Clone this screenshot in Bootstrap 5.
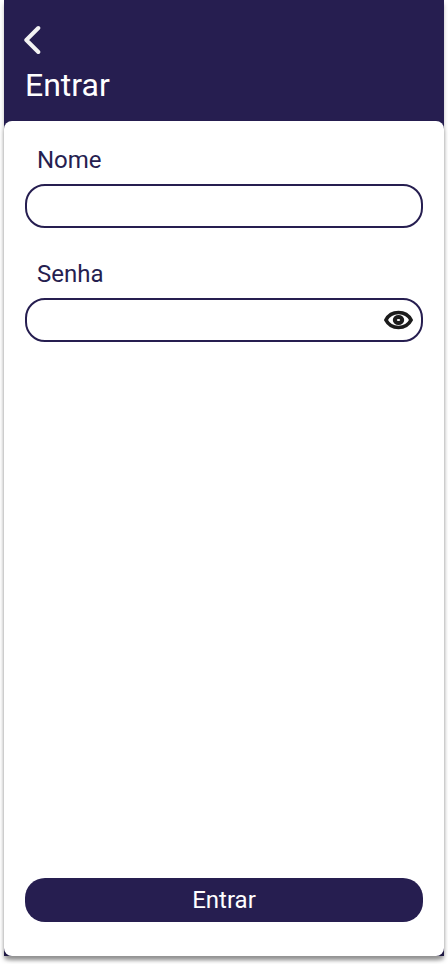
<!DOCTYPE html>
<html lang="pt-BR">
<head>
<meta charset="utf-8">
<meta name="viewport" content="width=device-width, initial-scale=1">
<title>Entrar</title>
<link href="https://cdn.jsdelivr.net/npm/bootstrap@5.3.0/dist/css/bootstrap.min.css" rel="stylesheet">
<style>
:root { --brand: #261e50; }
body { font-family: Roboto, "Liberation Sans", sans-serif; height: 964px; overflow: hidden; background: #fff; }
.screen { width: 440px; height: 956px; background: var(--brand); box-shadow: 0 4px 4px rgba(0,0,0,.25); }
.screen-header { height: 121px; padding: 24px 20px 0; }
.back-link { width: 18px; height: 32px; margin-bottom: 10px; }
.screen-title { font-size: 32px; line-height: 38px; padding-left: 1px; font-weight: 400; }
.panel { border-radius: 8px; padding: 24px 21px 34px; box-shadow: 0 4px 4px rgba(0,0,0,.25); }
.field-label { font-size: 24px; line-height: 30px; color: var(--brand); padding-left: 12px; margin-bottom: 9px; }
.field-group + .field-group { margin-top: 31px; }
.field { height: 44px; border: 2px solid var(--brand); border-radius: 20px; }
.field input { height: 40px; border-radius: 18px; box-shadow: none !important; }
.submit { height: 44px; border-radius: 20px; background: var(--brand) !important; font-size: 24px; line-height: 28px; }
</style>
</head>
<body>
<main class="screen mx-auto d-flex flex-column">
  <header class="screen-header text-white">
    <a href="#" class="back-link d-block" aria-label="Voltar">
      <svg class="d-block" width="18" height="32" viewBox="0 0 18 32"><path d="M14.3 4 L2.3 16 L14.3 28" fill="none" stroke="#f3f3f3" stroke-width="4" stroke-linecap="round" stroke-linejoin="round"/></svg>
    </a>
    <h1 class="screen-title mb-0">Entrar</h1>
  </header>
  <form class="panel bg-white flex-grow-1 d-flex flex-column">
    <div class="field-group">
      <label class="field-label d-block" for="nome">Nome</label>
      <div class="field d-flex"><input id="nome" type="text" class="form-control border-0 bg-transparent"></div>
    </div>
    <div class="field-group">
      <label class="field-label d-block" for="senha">Senha</label>
      <div class="field d-flex align-items-center">
        <input id="senha" type="password" class="form-control border-0 bg-transparent">
        <button type="button" class="btn border-0 p-0 pe-2 flex-shrink-0" aria-label="Mostrar senha">
          <svg class="d-block" width="29" height="20" viewBox="0 0 29 20" fill="none" stroke="#1c1c1c"><path d="M1.900 10C4.500 5 9 2.500 14.500 2.500S24.500 5 27.100 10C24.500 15 20 17.500 14.500 17.500S4.500 15 1.900 10Z" stroke-width="3.700" stroke-linejoin="round"/><ellipse cx="14.500" cy="10" rx="3.700" ry="3.100" stroke-width="4"/></svg>
        </button>
      </div>
    </div>
    <button type="button" class="submit btn border-0 text-white w-100 mt-auto py-0">Entrar</button>
  </form>
</main>
<script src="https://cdn.jsdelivr.net/npm/bootstrap@5.3.0/dist/js/bootstrap.bundle.min.js"></script>
</body>
</html>
